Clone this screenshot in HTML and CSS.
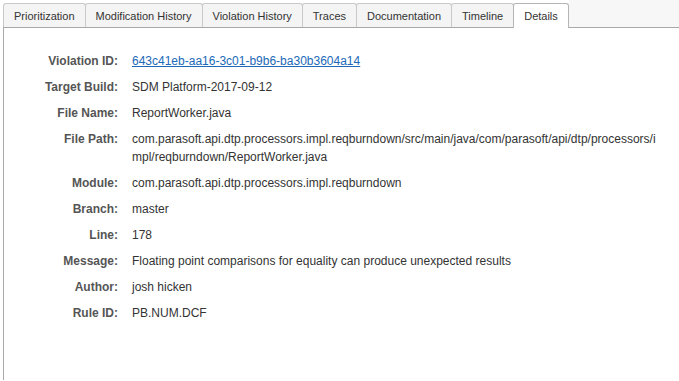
FILE: index.html
```html
<!DOCTYPE html>
<html lang="en">
<head>
    <meta charset="UTF-8">
    <title>Violation Details</title>
    <link rel="stylesheet" href="styles.css">
</head>
<body>
    <div class="tab-bar">
        <div class="tab">Prioritization</div>
        <div class="tab">Modification History</div>
        <div class="tab">Violation History</div>
        <div class="tab">Traces</div>
        <div class="tab">Documentation</div>
        <div class="tab">Timeline</div>
        <div class="tab active">Details</div>
        <div class="tab-filler"></div>
    </div>

    <div class="panel">
        <div class="details">
            <div class="label">Violation ID:</div>
            <div class="value"><a href="#">643c41eb-aa16-3c01-b9b6-ba30b3604a14</a></div>

            <div class="label">Target Build:</div>
            <div class="value">SDM Platform-2017-09-12</div>

            <div class="label">File Name:</div>
            <div class="value">ReportWorker.java</div>

            <div class="label">File Path:</div>
            <div class="value">com.parasoft.api.dtp.processors.impl.reqburndown/src/main/java/com/parasoft/api/dtp/processors/impl/reqburndown/ReportWorker.java</div>

            <div class="label">Module:</div>
            <div class="value">com.parasoft.api.dtp.processors.impl.reqburndown</div>

            <div class="label">Branch:</div>
            <div class="value">master</div>

            <div class="label">Line:</div>
            <div class="value">178</div>

            <div class="label">Message:</div>
            <div class="value">Floating point comparisons for equality can produce unexpected results</div>

            <div class="label">Author:</div>
            <div class="value">josh hicken</div>

            <div class="label">Rule ID:</div>
            <div class="value">PB.NUM.DCF</div>
        </div>
    </div>
</body>
</html>
```

FILE: styles.css
```css
body {
    margin: 0;
    font-family: "Liberation Sans", Arial, sans-serif;
    color: #333333;
    background-color: #ffffff;
}

/* Tab strip */
.tab-bar {
    display: flex;
    align-items: flex-end;
    height: 27px;
    padding-left: 3px;
}

.tab {
    height: 23px;
    line-height: 24px;
    padding: 0 10px;
    font-size: 11px;
    color: #333333;
    background-color: #f4f4f4;
    border: 1px solid #c9c9c9;
    border-bottom: none;
    border-radius: 3px 3px 0 0;
    margin-right: -1px;
    white-space: nowrap;
}

.tab.active {
    background-color: #ffffff;
    border-color: #b5b5b5;
    height: 24px;
    margin-bottom: -1px;
    position: relative;
    z-index: 1;
}

.tab-filler {
    flex: 1;
    align-self: stretch;
    background-color: #f7f7f7;
    margin-left: 1px;
}

/* Content panel */
.panel {
    margin-left: 3px;
    border-top: 1px solid #a9a9a9;
    border-left: 1px solid #a9a9a9;
    min-height: calc(100vh - 28px);
    box-sizing: border-box;
    padding: 24px 18px 0 0;
}

.details {
    display: grid;
    grid-template-columns: 114px 1fr;
    column-gap: 14px;
    row-gap: 8px;
    font-size: 12px;
    line-height: 18px;
}

.label {
    text-align: right;
    font-weight: bold;
    color: #555555;
}

.value {
    color: #333333;
    word-break: break-all;
}

.value a {
    color: #2069b8;
    text-decoration: underline;
}
```
